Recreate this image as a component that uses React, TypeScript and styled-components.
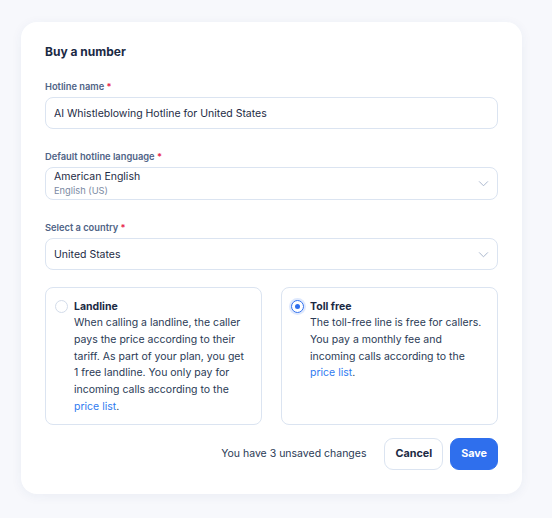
import React, { useState } from 'react';
import styled, { createGlobalStyle } from 'styled-components';

const GlobalStyle = createGlobalStyle`
  * { box-sizing: border-box; }
  body {
    margin: 0;
    background: #f7f8fc;
    font-family: Inter, "Noto Sans", sans-serif;
    color: #1d2b45;
  }
`;

const Page = styled.div`
  padding: 22px 30px 25px 21px;
`;

const Card = styled.div`
  background: #ffffff;
  border-radius: 16px;
  box-shadow: 0 2px 12px rgba(40, 60, 120, 0.06);
  padding: 22px 24px 24px 24px;
  display: flex;
  flex-direction: column;
`;

const Title = styled.h2`
  margin: 0 0 20px;
  font-size: 12px;
  font-weight: 650;
  line-height: 16px;
  color: #1b2a44;
`;

const Field = styled.div<{ $last?: boolean }>`
  display: flex;
  flex-direction: column;
  gap: 3px;
  margin-bottom: ${(p) => (p.$last ? '17px' : '21px')};
`;

const Label = styled.label`
  font-size: 9.3px;
  font-weight: 600;
  line-height: 14px;
  color: #4f6386;
`;

const Required = styled.span`
  color: #e8294f;
`;

const Box = styled.div`
  border: 1px solid #dbe4f1;
  border-radius: 8px;
  min-height: 32px;
  padding: 1px 8px 1px 8px;
  display: flex;
  align-items: center;
  justify-content: space-between;
  background: #fff;
`;

const TextInput = styled.input`
  border: none;
  outline: none;
  width: 100%;
  font: inherit;
  font-size: 10.5px;
  color: #1d2b45;
  padding: 0;
  background: transparent;
`;

const SelectText = styled.div`
  display: flex;
  flex-direction: column;
`;

const Primary = styled.span`
  font-size: 10.5px;
  line-height: 15px;
  color: #1d2b45;
`;

const Secondary = styled.span`
  font-size: 9.3px;
  line-height: 14px;
  color: #7b8aa3;
`;

const Options = styled.div`
  display: grid;
  grid-template-columns: 1fr 1fr;
  gap: 19px;
  margin-bottom: 13px;
`;

const Option = styled.div`
  border: 1px solid #dbe4f1;
  border-radius: 8px;
  padding: 10px 10px 8px 9px;
  display: flex;
  gap: 6px;
  align-items: flex-start;
  cursor: pointer;
  min-height: 136px;
`;

const Radio = styled.span<{ $checked: boolean }>`
  flex: none;
  width: 13px;
  height: 13px;
  margin-top: 2px;
  border-radius: 50%;
  border: ${(p) => (p.$checked ? '1.5px solid #2f6fed' : '1px solid #d3dcea')};
  box-shadow: ${(p) => (p.$checked ? '0 0 0 2px #dfe9fd' : 'none')};
  display: flex;
  align-items: center;
  justify-content: center;
  &::after {
    content: '';
    width: 5px;
    height: 5px;
    border-radius: 50%;
    background: ${(p) => (p.$checked ? '#2f6fed' : 'transparent')};
  }
`;

const OptionBody = styled.div`
  display: flex;
  flex-direction: column;
`;

const OptionTitle = styled.span`
  font-size: 10.5px;
  font-weight: 650;
  line-height: 17px;
  color: #1b2a44;
`;

const OptionText = styled.p`
  margin: 0;
  font-size: 10.5px;
  line-height: 16.8px;
  color: #2a3a55;
`;

const Link = styled.a`
  color: #2f7bf0;
  text-decoration: none;
`;

const Footer = styled.div`
  display: flex;
  justify-content: flex-end;
  align-items: center;
  gap: 7px;
`;

const Unsaved = styled.span`
  font-size: 10.5px;
  color: #2a3a55;
  margin-right: 11px;
`;

const Button = styled.button<{ $primary?: boolean }>`
  font-family: inherit;
  font-size: 10.8px;
  font-weight: 700;
  height: 32px;
  padding: 0 10px;
  border-radius: 9px;
  cursor: pointer;
  border: 1px solid ${(p) => (p.$primary ? '#2f6fed' : '#dbe4f1')};
  background: ${(p) => (p.$primary ? '#2f6fed' : '#fff')};
  color: ${(p) => (p.$primary ? '#fff' : '#1b2a44')};
`;

const Chevron = () => (
  <svg width="11" height="11" viewBox="0 0 12 12" fill="none">
    <path d="M1.5 4l4.5 4.5L10.5 4" stroke="#a3b1c9" strokeWidth="1" strokeLinecap="round" strokeLinejoin="round" />
  </svg>
);

export default function App() {
  const [name, setName] = useState('AI Whistleblowing Hotline for United States');
  const [type, setType] = useState<'landline' | 'tollfree'>('tollfree');

  return (
    <Page>
      <GlobalStyle />
      <Card>
        <Title>Buy a number</Title>
        <Field>
          <Label>
            Hotline name <Required>*</Required>
          </Label>
          <Box>
            <TextInput value={name} onChange={(e) => setName(e.target.value)} />
          </Box>
        </Field>
        <Field>
          <Label>
            Default hotline language <Required>*</Required>
          </Label>
          <Box>
            <SelectText>
              <Primary>American English</Primary>
              <Secondary>English (US)</Secondary>
            </SelectText>
            <Chevron />
          </Box>
        </Field>
        <Field $last>
          <Label>
            Select a country <Required>*</Required>
          </Label>
          <Box>
            <Primary>United States</Primary>
            <Chevron />
          </Box>
        </Field>
        <Options>
          <Option onClick={() => setType('landline')}>
            <Radio $checked={type === 'landline'} />
            <OptionBody>
              <OptionTitle>Landline</OptionTitle>
              <OptionText>
                When calling a landline, the caller pays the price according to their tariff. As part of your plan,
                you get 1 free landline. You only pay for incoming calls according to the{' '}
                <Link href="#">price list</Link>.
              </OptionText>
            </OptionBody>
          </Option>
          <Option onClick={() => setType('tollfree')}>
            <Radio $checked={type === 'tollfree'} />
            <OptionBody>
              <OptionTitle>Toll free</OptionTitle>
              <OptionText>
                The toll-free line is free for callers. You pay a monthly fee and incoming calls according to the{' '}
                <Link href="#">price list</Link>.
              </OptionText>
            </OptionBody>
          </Option>
        </Options>
        <Footer>
          <Unsaved>You have 3 unsaved changes</Unsaved>
          <Button>Cancel</Button>
          <Button $primary>Save</Button>
        </Footer>
      </Card>
    </Page>
  );
}
